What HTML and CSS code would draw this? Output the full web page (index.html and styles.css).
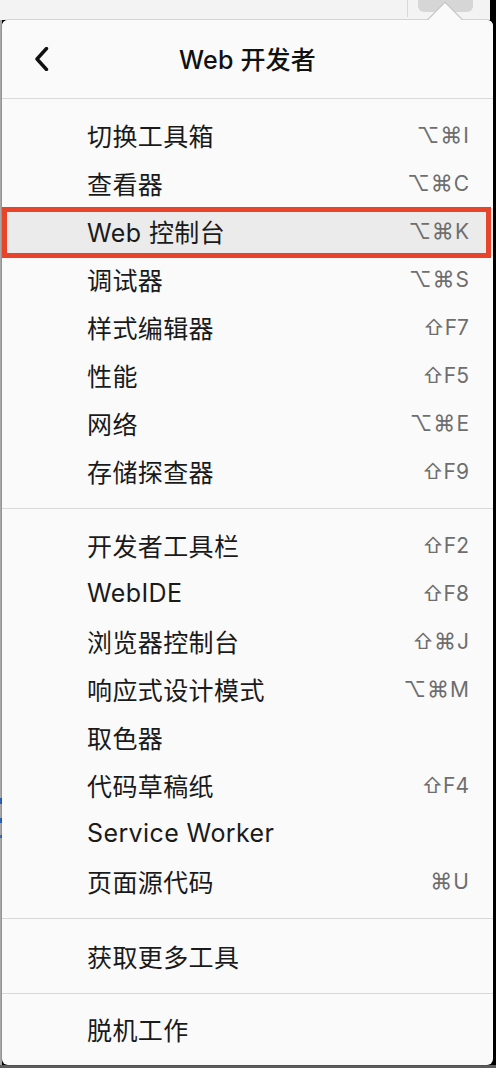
FILE: index.html
```html
<!DOCTYPE html>
<html lang="zh-CN">
<head>
<meta charset="utf-8">
<title>Web 开发者</title>
<link rel="stylesheet" href="styles.css">
</head>
<body>
<div class="topbar">
  <div class="topbar-fill"></div>
  <div class="topbar-divider"></div>
  <div class="topbar-button"></div>
  <div class="topbar-black"></div>
</div>
<div class="stage">
  <div class="panel">
    <div class="arrow"></div>
    <div class="header">
      <button class="back" aria-label="返回">
        <svg width="16" height="24" viewBox="0 0 16 24"><polyline points="12.5,1.5 3,12 12.5,22.5" fill="none" stroke="#111" stroke-width="3.4" stroke-linecap="round" stroke-linejoin="round"/></svg>
      </button>
      <div class="title">Web 开发者</div>
    </div>
    <div class="group g1">
      <div class="row"><span class="label">切换工具箱</span><span class="key"><span class="mod">⌥⌘</span>I</span></div>
      <div class="row"><span class="label">查看器</span><span class="key"><span class="mod">⌥⌘</span>C</span></div>
      <div class="row selected"><span class="label">Web 控制台</span><span class="key"><span class="mod">⌥⌘</span>K</span></div>
      <div class="row"><span class="label">调试器</span><span class="key"><span class="mod">⌥⌘</span>S</span></div>
      <div class="row"><span class="label">样式编辑器</span><span class="key">⇧F7</span></div>
      <div class="row"><span class="label">性能</span><span class="key">⇧F5</span></div>
      <div class="row"><span class="label">网络</span><span class="key"><span class="mod">⌥⌘</span>E</span></div>
      <div class="row"><span class="label">存储探查器</span><span class="key">⇧F9</span></div>
    </div>
    <div class="group g2">
      <div class="row"><span class="label">开发者工具栏</span><span class="key">⇧F2</span></div>
      <div class="row"><span class="label">WebIDE</span><span class="key">⇧F8</span></div>
      <div class="row"><span class="label">浏览器控制台</span><span class="key">⇧<span class="mod">⌘</span>J</span></div>
      <div class="row"><span class="label">响应式设计模式</span><span class="key"><span class="mod">⌥⌘</span>M</span></div>
      <div class="row"><span class="label">取色器</span><span class="key"></span></div>
      <div class="row"><span class="label">代码草稿纸</span><span class="key">⇧F4</span></div>
      <div class="row"><span class="label">Service Worker</span><span class="key"></span></div>
      <div class="row"><span class="label">页面源代码</span><span class="key"><span class="mod">⌘</span>U</span></div>
    </div>
    <div class="group g3">
      <div class="row"><span class="label">获取更多工具</span><span class="key"></span></div>
    </div>
    <div class="group g4">
      <div class="row"><span class="label">脱机工作</span><span class="key"></span></div>
    </div>
  </div>
</div>
</body>
</html>
```
FILE: styles.css
```css
html, body {
  margin: 0;
  padding: 0;
}
body {
  width: 496px;
  height: 1068px;
  overflow: hidden;
  background: #000;
  font-family: "Inter", "Noto Sans CJK SC", sans-serif;
}
.topbar {
  height: 20px;
  display: flex;
  align-items: flex-start;
}
.topbar-fill {
  width: 407px;
  height: 20px;
  background: #f3f3f3;
}
.topbar-divider {
  width: 1px;
  height: 20px;
  background: linear-gradient(#d8d8d8 0 17px, #f3f3f3 17px);
}
.topbar-button {
  width: 82px;
  height: 20px;
  background: #f3f3f3;
  position: relative;
}
.topbar-button::before {
  content: "";
  position: absolute;
  left: 10px;
  top: 0;
  width: 55px;
  height: 12px;
  background: #d6d6d6;
  border-radius: 0 0 6px 6px;
}
.topbar-black {
  flex: 1;
  height: 20px;
  background: #000;
}
.stage {
  height: 1048px;
  display: flex;
  align-items: flex-start;
  background:
    linear-gradient(to bottom, transparent 0 1045px, #5c5c5c 1045px),
    linear-gradient(to right, #a8a8a8 0 2px, #000 2px);
  background-color: #000;
}
.stage::before {
  content: "";
  width: 2px;
  height: 1045px;
  flex: none;
  background:
    linear-gradient(to bottom,
      #a8a8a8 0 778px, #2f62b6 778px 784px, #a8a8a8 784px 798px,
      #2f62b6 798px 803px, #a8a8a8 803px 815px, #3b6cc0 815px 818px, #a8a8a8 818px);
}
.panel {
  position: relative;
  width: 491px;
  height: 1045px;
  background: #fafafa;
  border-radius: 6px;
  box-shadow: 0 0 0 1px rgba(0, 0, 0, 0.12);
  display: flex;
  flex-direction: column;
}
.arrow {
  position: absolute;
  left: 430px;
  top: -13px;
  width: 25px;
  height: 25px;
  background: #fafafa;
  border-left: 1px solid #bdbdbd;
  border-top: 1px solid #bdbdbd;
  transform: rotate(45deg);
  transform-origin: center;
}
.header {
  position: relative;
  height: 78px;
  border-bottom: 1px solid #d9d9d9;
  display: flex;
  align-items: center;
  justify-content: center;
  border-radius: 6px 6px 0 0;
  background: #fafafa;
}
.back {
  position: absolute;
  left: 31px;
  top: 26px;
  width: 18px;
  height: 26px;
  padding: 0;
  border: 0;
  background: transparent;
  display: flex;
  align-items: center;
  justify-content: center;
}
.title {
  font-size: 25px;
  font-weight: 500;
  color: #111;
  letter-spacing: 0.2px;
  margin-top: -3px;
}
.group {
  padding: 13px 0 12px;
  border-bottom: 1px solid #d9d9d9;
}
.g3 {
  padding-top: 14px;
}
.g4 {
  padding-top: 12px;
  padding-bottom: 0;
  border-bottom: 0;
}
.row {
  position: relative;
  height: 48px;
  display: flex;
  align-items: center;
  padding: 0 24px 0 85px;
}
.label {
  flex: 1;
  font-size: 25px;
  color: #1a1a1a;
  letter-spacing: 0.4px;
  margin-top: -2px;
}
.key {
  font-family: "Inter", "DejaVu Sans", sans-serif;
  font-size: 21px;
  color: #6e6e6e;
  margin-top: -2px;
  display: flex;
  align-items: baseline;
}
.mod {
  font-size: 22px;
  letter-spacing: 1px;
}
.selected {
  background: #ebebeb;
}
.selected::after {
  content: "";
  position: absolute;
  left: 0;
  right: 2px;
  top: -1px;
  bottom: -2px;
  border: 5px solid #e8432b;
  pointer-events: none;
}
```
